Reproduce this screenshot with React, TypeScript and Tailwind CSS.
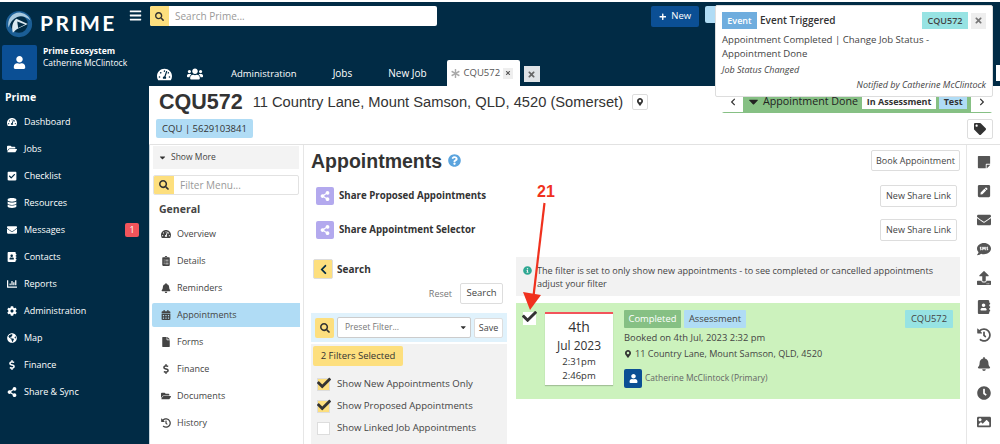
import React from "react";
import {
  FaAddressBook, FaBars, FaBell, FaCalendarAlt, FaCaretDown, FaChartBar, FaCheck, FaCheckSquare, FaChevronLeft,
  FaChevronRight, FaClipboardList, FaClock, FaCog, FaDatabase, FaDollarSign, FaEnvelope, FaFile, FaFolderOpen,
  FaGlobeAmericas, FaHistory, FaImage, FaInfoCircle, FaMapMarkerAlt, FaPenSquare, FaPlus, FaQuestionCircle, FaSearch,
  FaShareAlt, FaSms, FaStickyNote, FaTachometerAlt, FaTag, FaTimes, FaUpload, FaUser, FaUsers, FaAsterisk,
} from "react-icons/fa";

const sideNav = [
  { label: "Dashboard", icon: FaTachometerAlt },
  { label: "Jobs", icon: FaFolderOpen },
  { label: "Checklist", icon: FaCheckSquare },
  { label: "Resources", icon: FaDatabase },
  { label: "Messages", icon: FaEnvelope, badge: "1" },
  { label: "Contacts", icon: FaAddressBook },
  { label: "Reports", icon: FaChartBar },
  { label: "Administration", icon: FaCog },
  { label: "Map", icon: FaGlobeAmericas },
  { label: "Finance", icon: FaDollarSign },
  { label: "Share & Sync", icon: FaShareAlt },
];

const jobMenu = [
  { label: "Overview", icon: FaTachometerAlt },
  { label: "Details", icon: FaClipboardList },
  { label: "Reminders", icon: FaBell },
  { label: "Appointments", icon: FaCalendarAlt, active: true },
  { label: "Forms", icon: FaFile },
  { label: "Finance", icon: FaDollarSign },
  { label: "Documents", icon: FaFolderOpen },
  { label: "History", icon: FaHistory },
];

const railIcons = [FaStickyNote, FaPenSquare, FaEnvelope, FaSms, FaUpload, FaAddressBook, FaHistory, FaBell, FaClock, FaImage];

const filters = [
  { label: "Show New Appointments Only", checked: true },
  { label: "Show Proposed Appointments", checked: true },
  { label: "Show Linked Job Appointments", checked: false },
];

const Logo = () => (
  <svg width="28" height="28" viewBox="0 0 32 32" className="shrink-0">
    <circle cx="16" cy="16" r="12.5" fill="none" stroke="#1b5e96" strokeWidth="5" />
    <path d="M4 20C2 10 9 2 18 3c6 1 10 5 11 9-4-4-10-6-15-4-5 2-8 6-10 12z" fill="#a9c9de" />
    <path d="M9 26c-2-7 0-13 4-16l13 6-11 5c-2 1-4 3-6 5z" fill="#dce9f1" />
    <path d="M14 13l9 3.500-8 4z" fill="#012b45" />
  </svg>
);

const ShareRow = ({ label, mt }: { label: string; mt: string }) => (
  <div className={`flex items-center ${mt}`}>
    <span className="w-[18px] h-[18px] ml-[5px] rounded-[2px] bg-[#b3a9ee] flex items-center justify-center text-white text-[10px]">
      <FaShareAlt />
    </span>
    <span className="ml-[5px] text-[9.700px] font-bold text-[#333]">{label}</span>
    <button className="ml-auto mr-[3px] w-[77px] h-[22px] border border-[#ddd] rounded-[2px] bg-white text-[9px] text-[#444]">
      New Share Link
    </button>
  </div>
);

export default function App() {
  return (
    <div className="relative w-[1000px] h-[444px] overflow-hidden bg-white pt-[2px] font-['Open_Sans',sans-serif] text-[#444]">
      <div className="flex h-[442px]">
        {/* left nav */}
        <aside className="w-[149px] shrink-0 bg-[#012b45] text-white">
          <div className="flex items-start h-[41px] pl-[5px] pt-[8px]">
            <Logo />
            <span className="ml-[7px] text-[21px] leading-[26px] font-bold tracking-[2.400px] font-['Lato',sans-serif]">PRIME</span>
            <FaBars className="ml-auto mr-[7px] text-[13px] mt-[-1px]" />
          </div>
          <div className="flex items-center ml-[2px] mt-[2px]">
            <span className="w-[35px] h-[35px] rounded-[2px] bg-[#0b4f94] flex items-center justify-center text-[13px]">
              <FaUser />
            </span>
            <div className="ml-[6px] text-[8.500px] leading-[12px] mb-[11px]">
              <div className="font-bold">Prime Ecosystem</div>
              <div>Catherine McClintock</div>
            </div>
          </div>
          <div className="ml-[5px] mt-[9px] text-[10.500px] leading-[16px] font-bold">Prime</div>
          <nav className="mt-[3px]">
            {sideNav.map((n) => {
              const Icon = n.icon;
              return (
                <div key={n.label} className="flex items-center h-[27px] pl-[7px] text-[9px]">
                  <span className="w-[10px] flex justify-center text-[10px]"><Icon /></span>
                  <span className="ml-[7px]">{n.label}</span>
                  {n.badge && (
                    <span className="ml-auto mr-[10px] w-[14px] h-[14px] rounded-[2px] bg-[#f2545b] text-[9px] flex items-center justify-center">
                      {n.badge}
                    </span>
                  )}
                </div>
              );
            })}
          </nav>
        </aside>

        <div className="flex-1 min-w-0 flex flex-col">
          {/* top bar */}
          <header className="h-[84px] shrink-0 bg-[#012b45] text-white flex flex-col">
            <div className="flex items-start pt-[4px] pl-[1px]">
              <div className="flex w-[287px] h-[20px] rounded-[2px] overflow-hidden bg-white">
                <span className="w-[19px] bg-[#fddf7e] flex items-center justify-center text-[9px] text-[#333]"><FaSearch /></span>
                <span className="ml-[6px] text-[10px] leading-[20px] text-[#999]">Search Prime...</span>
              </div>
              <button className="ml-[214px] w-[48px] h-[21px] rounded-[2px] bg-[#0b4f94] text-[9.500px] flex items-center justify-center gap-[5px]">
                <FaPlus className="text-[7.500px]" /> New
              </button>
              <span className="ml-[6px] w-[20px] h-[17px] rounded-[2px] bg-[#b0dcf5]" />
            </div>
            <div className="mt-auto flex items-end h-[26px] text-[9.500px]">
              <FaTachometerAlt className="ml-[8px] mb-[4px] text-[15px]" />
              <FaUsers className="ml-[15px] mb-[4px] text-[16px]" />
              <span className="ml-[28px] mb-[5px]">Administration</span>
              <span className="ml-[36px] mb-[5px] text-[10px]">Jobs</span>
              <span className="ml-[36px] mb-[5px] text-[10px]">New Job</span>
              <div className="ml-[20px] w-[73px] h-[26px] bg-white rounded-t-[2px] flex items-center pl-[4px] text-[#555]">
                <FaAsterisk className="text-[9px] text-[#aaa]" />
                <span className="ml-[4px]">CQU572</span>
                <span className="ml-[3px] w-[10px] h-[11px] bg-[#eee] flex items-center justify-center text-[6px]"><FaTimes /></span>
              </div>
              <span className="ml-[4px] mb-[4px] w-[16px] h-[16px] bg-[#dfe3e6] text-[#666] flex items-center justify-center text-[9px]"><FaTimes /></span>
            </div>
          </header>

          {/* job header */}
          <div className="h-[59px] shrink-0 border-b border-[#e2e2e2] relative">
            <div className="flex items-center pl-[10px] pt-[1px]">
              <span className="font-['Liberation_Sans',sans-serif] text-[21.500px] leading-[30px] font-bold text-[#333]">CQU572</span>
              <span className="ml-[10px] font-['Liberation_Sans',sans-serif] text-[14.700px] text-[#333]">11 Country Lane, Mount Samson, QLD, 4520 (Somerset)</span>
              <span className="ml-[9px] w-[16px] h-[16px] border border-[#ddd] rounded-[2px] flex items-center justify-center text-[8px] text-[#333]"><FaMapMarkerAlt /></span>
            </div>
            <div className="ml-[7px] mt-[2px] flex items-start">
              <span className="w-[97px] h-[19px] rounded-[2px] bg-[#b0dcf5] text-[9.500px] leading-[19px] text-center text-[#333]">CQU | 5629103841</span>
              <span className="ml-auto mr-[7px] w-[26px] h-[20px] border border-[#ddd] rounded-[2px] flex items-center justify-center text-[12px] text-[#333]"><FaTag /></span>
            </div>
          </div>

          <div className="flex flex-1 min-h-0">
            {/* job menu */}
            <div className="w-[154px] shrink-0 border-l border-[#c9d6de] pl-[2px]">
              <div className="ml-[1px] w-[146px] h-[23px] mt-[1px] bg-[#f3f3f3] flex items-center pl-[5px] text-[8.500px]">
                <FaCaretDown className="text-[9px] text-[#333]" />
                <span className="ml-[4px]">Show More</span>
              </div>
              <div className="ml-[1px] flex w-[146px] h-[20px] mt-[6px] border border-[#e2e2e2] rounded-[2px] overflow-hidden">
                <span className="w-[20px] bg-[#fddf7e] flex items-center justify-center text-[10px] text-[#333]"><FaSearch /></span>
                <span className="ml-[6px] text-[10px] leading-[18px] text-[#999]">Filter Menu...</span>
              </div>
              <div className="ml-[7px] mt-[6px] text-[10.500px] leading-[16px] font-bold text-[#444]">General</div>
              <div className="mt-[3px]">
                {jobMenu.map((m) => {
                  const Icon = m.icon;
                  return (
                    <div key={m.label} className="h-[27px] flex items-center">
                      <div className={`flex items-center w-[148px] h-[24px] pl-[8px] text-[9px] rounded-l-[2px] ${m.active ? "bg-[#b0dcf5]" : ""}`}>
                        <span className="w-[12px] flex justify-center text-[10px] text-[#444]"><Icon /></span>
                        <span className="ml-[5px]">{m.label}</span>
                      </div>
                    </div>
                  );
                })}
              </div>
            </div>

            {/* main panel */}
            <main className="flex-1 min-w-0 border-l border-[#e6e6e6] pl-[7px] pr-[6px]">
              <div className="flex items-start pt-[5px]">
                <h1 className="mt-[-1px] font-['Liberation_Sans',sans-serif] text-[19.500px] leading-[24px] font-bold text-[#333]">Appointments</h1>
                <FaQuestionCircle className="ml-[6px] mt-[4px] text-[13px] text-[#5ba4de]" />
                <button className="ml-auto w-[89px] h-[21px] border border-[#ddd] rounded-[2px] text-[9px]">Book Appointment</button>
              </div>
              <ShareRow label="Share Proposed Appointments" mt="mt-[12px]" />
              <ShareRow label="Share Appointment Selector" mt="mt-[12px]" />

              <div className="flex mt-[18px]">
                <div className="w-[196px] shrink-0">
                  <div className="flex items-center ml-[2px]">
                    <span className="w-[20px] h-[20px] bg-[#fddf7e] border border-[#ddd] rounded-[2px] flex items-center justify-center text-[#012b45] text-[11px]"><FaChevronLeft /></span>
                    <span className="ml-[4px] text-[10px] font-bold text-[#333]">Search</span>
                  </div>
                  <div className="flex items-center justify-end mt-[4px] pr-[4px]">
                    <span className="text-[9px] text-[#777]">Reset</span>
                    <button className="ml-[8px] w-[43px] h-[21px] border border-[#ddd] rounded-[2px] text-[9.500px]">Search</button>
                  </div>
                  <div className="flex items-center h-[29px] mt-[9px] bg-[#e0f2fc] pl-[4px]">
                    <span className="w-[19px] h-[20px] bg-[#fddf7e] rounded-[2px] flex items-center justify-center text-[10px] text-[#333]"><FaSearch /></span>
                    <div className="ml-[3px] w-[134px] h-[21px] bg-white border border-[#ccc] rounded-[2px] flex items-center pl-[7px] text-[8.500px] text-[#777]">
                      Preset Filter...
                      <FaCaretDown className="ml-auto mr-[3px] text-[#333]" />
                    </div>
                    <button className="ml-[3px] w-[29px] h-[20px] bg-white border border-[#ddd] rounded-[2px] text-[9px]">Save</button>
                  </div>
                  <div className="mt-[2px] h-[110px] bg-[#f2f2f2] pl-[2px] pt-[2px]">
                    <span className="block w-[90px] h-[20px] rounded-[2px] bg-[#fddf7e] text-[9.500px] leading-[20px] text-center text-[#333]">2 Filters Selected</span>
                    <div className="mt-[7px]">
                      {filters.map((f) => (
                        <div key={f.label} className="flex items-center h-[22px] pl-[4px] text-[9.600px]">
                          <span className={`relative w-[13px] h-[13px] border border-[#ddd] ${f.checked ? "bg-[#fddf7e]" : "bg-white"}`}>
                            {f.checked && <FaCheck className="absolute left-[-1px] top-[-3px] text-[14px] text-[#333]" />}
                          </span>
                          <span className="ml-[7px]">{f.label}</span>
                        </div>
                      ))}
                    </div>
                    <div className="ml-[1px] mt-[2px] text-[9.500px] font-bold">Sorted As</div>
                  </div>
                </div>

                <div className="ml-[9px] flex-1 min-w-0 mt-[-2px]">
                  <div className="flex h-[39px] bg-[#f2f2f2] pl-[7px] pt-[7px] text-[9.100px] leading-[13px]">
                    <FaInfoCircle className="mt-[2px] shrink-0 text-[9px] text-[#2fa893]" />
                    <p className="ml-[5px] w-[415px] indent-0">The filter is set to only show new appointments - to see completed or cancelled appointments adjust your filter</p>
                  </div>
                  <div className="relative flex h-[96px] mt-[7px] bg-[#ccf2bd] pl-[7px] pt-[8px]">
                    <span className="relative w-[13px] h-[13px] bg-white mt-[1px]">
                      <FaCheck className="absolute left-[-1px] top-[-3px] text-[15px] text-[#333]" />
                    </span>
                    <div className="ml-[9px] w-[68px] h-[73px] mt-[1px] bg-white border-t-2 border-[#f2545b] shadow-[0_1px_1px_rgba(0,0,0,0.2)] text-center text-[#333]">
                      <div className="text-[14px] leading-[20px] mt-[3px]">4th</div>
                      <div className="text-[12px] leading-[16px] mt-[1px]">Jul 2023</div>
                      <div className="text-[9.500px] leading-[14px] mt-[1px]">2:31pm</div>
                      <div className="text-[9.500px] leading-[14px]">2:46pm</div>
                    </div>
                    <div className="ml-[11px] flex-1 min-w-0 mt-[-1px] pr-[7px] text-[9.400px]">
                      <div className="flex">
                        <span className="w-[57px] h-[18px] rounded-[1px] bg-[#86c084] text-white leading-[18px] text-center">Completed</span>
                        <span className="ml-[3px] w-[62px] h-[18px] rounded-[1px] bg-[#b0dcf5] leading-[18px] text-center">Assessment</span>
                        <span className="ml-auto w-[48px] h-[18px] rounded-[1px] bg-[#97e3e3] leading-[18px] text-center">CQU572</span>
                      </div>
                      <div className="mt-[2px] leading-[16px]">Booked on 4th Jul, 2023 2:32 pm</div>
                      <div className="flex items-center leading-[16px] text-[9.100px]">
                        <FaMapMarkerAlt className="text-[8px] text-[#333]" />
                        <span className="ml-[3px]">11 Country Lane, Mount Samson, QLD, 4520</span>
                      </div>
                      <div className="flex items-center mt-[7px]">
                        <span className="w-[18px] h-[19px] rounded-[2px] bg-[#0b4f94] text-white flex items-center justify-center text-[9px]"><FaUser /></span>
                        <span className="ml-[3px] text-[8.500px] text-[#666]">Catherine McClintock (Primary)</span>
                      </div>
                    </div>
                  </div>
                </div>
              </div>
            </main>

            {/* right rail */}
            <div className="w-[34px] shrink-0 border-l border-[#e6e6e6] flex flex-col items-center pt-[10px] text-[#555] text-[14px]">
              {railIcons.map((Icon, i) => (
                <span key={i} className="h-[29.300px] flex items-start"><Icon /></span>
              ))}
            </div>
          </div>
        </div>
      </div>

      {/* status bar, the toast lies over its top */}
      <div className="absolute left-[722px] top-[90px] w-[270px] h-[23px] bg-[#86c084] rounded-[2px] flex items-center">
        <span className="w-[21px] h-[20px] bg-white flex items-center justify-center text-[8px] text-[#333]"><FaChevronLeft /></span>
        <FaCaretDown className="ml-[3px] text-[15px] text-[#222]" />
        <span className="ml-[2px] text-[10.700px] text-[#222]">Appointment Done</span>
        <span className="ml-[4px] h-[14px] w-[74px] bg-white text-[9px] font-bold leading-[14px] text-center text-[#333]">In Assessment</span>
        <span className="ml-[3px] h-[14px] w-[28px] bg-[#b0dcf5] text-[9px] font-bold leading-[14px] text-center text-[#333]">Test</span>
        <span className="ml-auto w-[21px] h-[20px] bg-white flex items-center justify-center text-[8px] text-[#333]"><FaChevronRight /></span>
      </div>
      <div className="absolute left-[996px] top-[65px] w-[4px] h-[16px] bg-white" />

      {/* event toast */}
      <div className="absolute left-[715px] top-[5px] w-[278px] h-[92px] bg-white rounded-[2px] border border-[#ddd] px-[6px] pt-[6px] text-[#444]">
        <div className="flex items-center">
          <span className="w-[35px] h-[17px] bg-[#6fadde] text-white text-[9px] font-semibold leading-[17px] text-center">Event</span>
          <span className="ml-[3px] text-[10px] font-semibold text-[#333]">Event Triggered</span>
          <span className="ml-auto w-[46px] h-[17px] bg-[#97e3e3] text-[9px] font-semibold leading-[17px] text-center">CQU572</span>
          <span className="ml-[3px] w-[15px] h-[16px] bg-[#eee] text-[#777] text-[9px] flex items-center justify-center"><FaTimes /></span>
        </div>
        <p className="mt-[4px] text-[9.600px] leading-[14px]">Appointment Completed | Change Job Status - Appointment Done</p>
        <p className="mt-[3px] text-[9px] italic leading-[12px]">Job Status Changed</p>
        <p className="mt-[3px] text-[9px] italic leading-[12px] text-right">Notified by Catherine McClintock</p>
      </div>

      {/* annotation */}
      <div className="absolute left-[537px] top-[183px] text-[16px] leading-[18px] font-bold text-[#f0311e] font-['Liberation_Sans',sans-serif]">21</div>
      <svg className="absolute left-[515px] top-[200px]" width="40" height="115" viewBox="0 0 40 115">
        <path d="M29.500 3L18.500 96" stroke="#f0311e" strokeWidth="2.200" fill="none" />
        <path d="M8 92L26 95L15 110z" fill="#f0311e" />
      </svg>
    </div>
  );
}
